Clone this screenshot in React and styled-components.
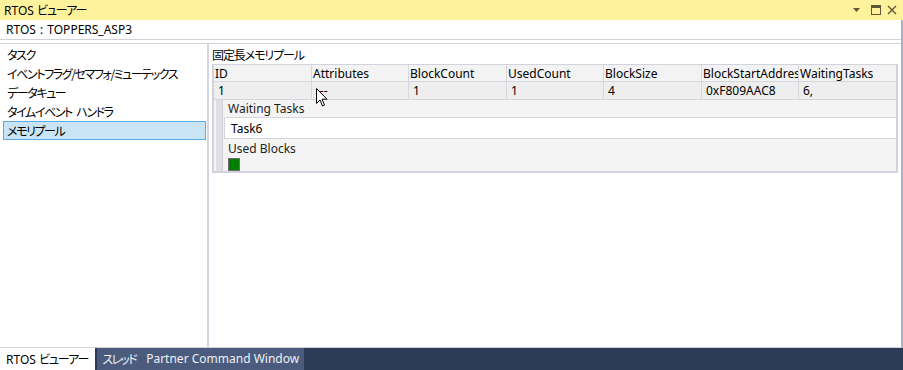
import React from "react";
import styled, { createGlobalStyle } from "styled-components";

const GlobalStyle = createGlobalStyle`
  html, body {
    margin: 0;
    padding: 0;
    background: #ffffff;
  }
  body {
    font-family: "Noto Sans", "Noto Sans CJK JP", sans-serif;
    font-size: 12px;
    color: #1e1e1e;
  }
`;

// Meiryo UI style condensed kana
const Jp = styled.span`
  font-family: "Noto Sans CJK JP", sans-serif;
  font-feature-settings: "palt";
  letter-spacing: ${(p) => p.$tight || "-1.1px"};
  word-spacing: 3px;
`;

const Window = styled.div`
  position: relative;
  width: 903px;
  height: 370px;
  display: flex;
  flex-direction: column;
  overflow: hidden;
`;

const TitleBar = styled.div`
  height: 20px;
  flex: 0 0 20px;
  background: #fff29d;
  display: flex;
  align-items: center;
  justify-content: space-between;
  padding: 0 6px 0 4px;
  line-height: 20px;
  color: #000000;
`;

const TitleButtons = styled.div`
  display: flex;
  align-items: center;
  gap: 6px;
`;

const Frame = styled.div`
  flex: 1;
  display: flex;
  flex-direction: column;
  border-right: 2px solid #a9b3c6;
  min-height: 0;
`;

const RtosHeader = styled.div`
  height: 19px;
  flex: 0 0 19px;
  padding-left: 6px;
  line-height: 19px;
  word-spacing: 1px;
  border-bottom: 1px solid #cfd0da;
  color: #000000;
`;

const Panels = styled.div`
  flex: 1;
  display: flex;
  margin-top: 3px;
  border-top: 1px solid #cfd0da;
  border-bottom: 1px solid #cfd0da;
  min-height: 0;
`;

const NavList = styled.div`
  width: 209px;
  flex: 0 0 209px;
  box-sizing: border-box;
  border-right: 2px solid #d4d5de;
  padding: 1px 1px 0 3px;
`;

const NavItem = styled.div`
  height: 19px;
  line-height: 17px;
  padding-left: 3px;
  box-sizing: border-box;
  color: #000000;
  white-space: nowrap;
  background: ${(p) => (p.$selected ? "#c9e5f5" : "transparent")};
  border: 1px solid ${(p) => (p.$selected ? "#5ea9e0" : "transparent")};
`;

const Content = styled.div`
  flex: 1;
  padding: 0 3px;
  display: flex;
  flex-direction: column;
`;

const Caption = styled.div`
  height: 20px;
  line-height: 21px;
  color: #000000;
`;

const TableFrame = styled.div`
  width: 686px;
  box-sizing: border-box;
  border: 2px solid #d2d3dc;
  border-top-width: 1px;
`;

const Row = styled.div`
  display: grid;
  grid-template-columns: 98px 97px 98px 97px 98px 97px 97px;
  background: ${(p) => (p.$header ? "#f3f3f3" : "#eeeeee")};
  border-bottom: 1px solid #d6d6df;
`;

const Cell = styled.div`
  height: ${(p) => (p.$header ? "16px" : "17px")};
  line-height: ${(p) => (p.$header ? "17px" : "18px")};
  padding-left: ${(p) => (p.$header ? "1px" : "4px")};
  border-right: 1px solid #d6d6df;
  white-space: nowrap;
  overflow: hidden;
  color: #000000;
  &:last-child {
    border-right: none;
  }
`;

const Detail = styled.div`
  display: flex;
  background: #f4f4f4;
`;

const Indent = styled.div`
  width: 6px;
  flex: 0 0 6px;
  margin-left: 2px;
  background: #dedee3;
  border-right: 1px solid #cfcfd8;
`;

const DetailBody = styled.div`
  flex: 1;
  display: flex;
  flex-direction: column;
  padding-left: 1px;
`;

const DetailLabel = styled.div`
  height: ${(p) => p.$h || "17px"};
  line-height: ${(p) => p.$h || "17px"};
  padding-left: 4px;
  color: #1e1e1e;
`;

const TaskBox = styled.div`
  height: 20px;
  line-height: 21px;
  background: #ffffff;
  border: 1px solid #d6d6df;
  border-right: none;
  padding-left: 6px;
  color: #000000;
`;

const BlockStrip = styled.div`
  display: flex;
  gap: 2px;
  padding-left: 4px;
  height: 13px;
`;

const Block = styled.div`
  width: 10px;
  height: 11px;
  background: ${(p) => (p.$used ? "#007f00" : "#ffffff")};
  border: 1px solid #6e6e6e;
`;

const TabBar = styled.div`
  height: 22px;
  flex: 0 0 22px;
  background: #2c3a57;
  display: flex;
  align-items: stretch;
`;

const Tab = styled.div`
  padding: 0 ${(p) => (p.$active ? "7px" : "5px")} 0 ${(p) => (p.$active ? "6px" : "5px")};
  line-height: 22px;
  white-space: nowrap;
  background: ${(p) => (p.$active ? "#ffffff" : "#4b5b7e")};
  color: ${(p) => (p.$active ? "#000000" : "#eef1f6")};
  margin-right: ${(p) => (p.$active ? "2px" : "0")};
`;

const Cursor = styled.svg`
  position: absolute;
  left: 316px;
  top: 88px;
  pointer-events: none;
`;

const columns = [
  ["ID", "1"],
  ["Attributes", "---"],
  ["BlockCount", "1"],
  ["UsedCount", "1"],
  ["BlockSize", "4"],
  ["BlockStartAddress", "0xF809AAC8"],
  ["WaitingTasks", "6,"],
];

const navItems = [
  "タスク",
  "イベントフラグ/セマフォ/ミューテックス",
  "データキュー",
  "タイムイベント ハンドラ",
  "メモリプール",
];

function TitleIcons() {
  return (
    <TitleButtons>
      <svg width="8" height="5" viewBox="0 0 8 5">
        <path d="M0 0 H7 L3.5 4 Z" fill="#5f5738" />
      </svg>
      <svg width="10" height="10" viewBox="0 0 10 10" style={{ marginLeft: 4 }}>
        <rect x="0.5" y="0.5" width="9" height="9" fill="none" stroke="#5f5738" />
        <rect x="0" y="0" width="10" height="3" fill="#5f5738" />
      </svg>
      <svg width="10" height="10" viewBox="0 0 10 10">
        <path d="M1 1 L9 9 M9 1 L1 9" stroke="#5f5738" strokeWidth="1.4" />
      </svg>
    </TitleButtons>
  );
}

export default function App() {
  return (
    <>
      <GlobalStyle />
      <Window>
        <TitleBar>
          <span>
            RTOS <Jp>ビューアー</Jp>
          </span>
          <TitleIcons />
        </TitleBar>
        <Frame>
          <RtosHeader>RTOS : TOPPERS_ASP3</RtosHeader>
          <Panels>
            <NavList>
              {navItems.map((item, i) => (
                <NavItem key={item} $selected={i === navItems.length - 1}>
                  <Jp $tight="-1.4px">{item}</Jp>
                </NavItem>
              ))}
            </NavList>
            <Content>
              <Caption>
                <Jp $tight="-1.1px">固定長メモリプール</Jp>
              </Caption>
              <TableFrame>
                <Row $header>
                  {columns.map(([h]) => (
                    <Cell key={h} $header>
                      {h}
                    </Cell>
                  ))}
                </Row>
                <Row>
                  {columns.map(([h, v]) => (
                    <Cell key={h}>{v}</Cell>
                  ))}
                </Row>
                <Detail>
                  <Indent />
                  <DetailBody>
                    <DetailLabel>Waiting Tasks</DetailLabel>
                    <TaskBox>Task6</TaskBox>
                    <DetailLabel $h="19px">Used Blocks</DetailLabel>
                    <BlockStrip>
                      <Block $used />
                    </BlockStrip>
                  </DetailBody>
                </Detail>
              </TableFrame>
            </Content>
          </Panels>
        </Frame>
        <TabBar>
          <Tab $active>
            RTOS <Jp>ビューアー</Jp>
          </Tab>
          <Tab>
            <Jp $tight="-1.6px">スレッド</Jp>
          </Tab>
          <Tab>Partner Command Window</Tab>
        </TabBar>
        <Cursor width="13" height="19" viewBox="0 0 13 19">
          <path
            d="M0.5 0.5 L0.5 15.5 L4 12 L6.5 18 L8.5 17 L6 11.2 L11 11.2 Z"
            fill="#ffffff"
            stroke="#000000"
            strokeWidth="1"
            strokeLinejoin="round"
          />
        </Cursor>
      </Window>
    </>
  );
}
